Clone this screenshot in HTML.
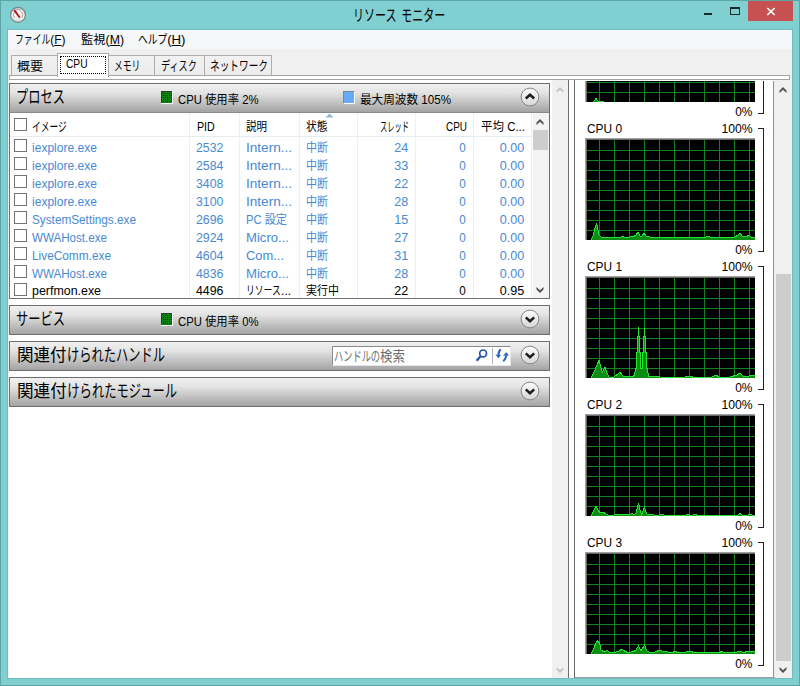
<!DOCTYPE html>
<html lang="ja"><head><meta charset="utf-8"><title>リソース モニター</title>
<style>
html,body{margin:0;padding:0;}
body{width:800px;height:686px;overflow:hidden;position:relative;background:#80cfd1;font-family:"Liberation Sans","Noto Sans CJK JP",sans-serif;}
.abs,.t,.g,.brk,.cb,.chk,.cs,.pan,.tab{position:absolute;box-sizing:border-box;}
.t{white-space:nowrap;display:block;}
.k{display:inline-block;transform:scaleX(0.74);transform-origin:0 50%;}
u{text-decoration:underline;}
#frame{left:0;top:0;width:800px;height:686px;border:1px solid #5fa5a8;}
#client{left:8px;top:30px;width:784px;height:648px;background:#f0f0f0;}
#clientb{left:7px;top:29px;width:786px;height:650px;border:1px solid #6fbcbf;}
#menu{left:8px;top:30px;width:784px;height:19px;background:#f5f6f7;border-top:1px solid #fbfcfc;}
#close{left:748px;top:1px;width:45px;height:20px;background:#c75050;}
.tab{background:#f0f0f0;border:1px solid #acacac;border-bottom:none;background:linear-gradient(#f2f2f2,#ebebeb);}
.pan{border:1px solid #6e6e6e;background:linear-gradient(#f0f0f0 0%,#e4e4e4 30%,#bfbfbf 70%,#a3a3a3 100%);}
.g{background:#000;border-top:1px solid #a0a0a0;border-left:1px solid #a0a0a0;overflow:hidden;}
.gi{position:absolute;left:0;top:0;right:0;bottom:0;border-top:1px solid #696969;border-left:1px solid #696969;}
.brk{border:1px solid #222;border-left:none;}
.chk{width:13px;height:13px;border:1px solid #747474;background:#fff;}
.cs{top:113px;width:1px;height:185px;background:#e9f0f7;}
</style></head><body>
<div class="abs" id="frame"></div>
<div class="abs" id="clientb"></div>
<div class="abs" id="client"></div>
<div class="abs" id="menu"></div>
<!-- title icon -->
<svg class="cb" style="left:9px;top:6px" width="18" height="18" viewBox="0 0 18 18">
<defs><linearGradient id="ic" x1="0" y1="0" x2="0" y2="1"><stop offset="0" stop-color="#ffffff"/><stop offset="0.6" stop-color="#f7f7f5"/><stop offset="1" stop-color="#d4d4d4"/></linearGradient></defs>
<circle cx="9" cy="8.9" r="7.4" fill="url(#ic)" stroke="#76888a" stroke-width="1.3"/>
<path d="M5.4 11.8 A4.6 4.6 0 0 1 5.6 5.8" fill="none" stroke="#b98b78" stroke-width="0.9"/>
<path d="M12.2 5.4 A4.6 4.6 0 0 1 12.9 11.6" fill="none" stroke="#b98b78" stroke-width="0.9"/>
<path d="M6.4 4.2 A5.2 5.2 0 0 1 12 4.4" fill="none" stroke="#7d7572" stroke-width="0.8"/>
<path d="M4.3 4.4 L6.1 3.4 L11.4 11 L10.2 12.2 Z" fill="#b8121f"/>
</svg>
<!-- window buttons -->
<div class="abs" style="left:704px;top:13px;width:8px;height:2px;background:#1b2a2b"></div>
<div class="abs" style="left:730px;top:7px;width:10px;height:8px;border:1px solid #1b2a2b;border-top-width:2px"></div>
<div class="abs" id="close"></div>
<svg class="cb" style="left:766px;top:7px" width="10" height="9" viewBox="0 0 10 9"><path d="M1.3 1 L8.7 8 M8.7 1 L1.3 8" stroke="#fff" stroke-width="1.7" fill="none"/></svg>
<!-- tabs -->
<div class="tab" style="left:11px;top:55px;width:47px;height:21px"></div>
<div class="tab" style="left:108px;top:55px;width:47px;height:21px"></div>
<div class="tab" style="left:154px;top:55px;width:51px;height:21px"></div>
<div class="tab" style="left:204px;top:55px;width:68px;height:21px"></div>
<div class="abs" style="left:9px;top:75px;width:781px;height:5px;background:#fff;border:1px solid #a5a5a5"></div>
<div class="tab" style="left:57px;top:53px;width:52px;height:24px;background:#fff"></div>
<div class="abs" style="left:60px;top:56px;width:46px;height:18px;border:1px dotted #000"></div>
<!-- left content -->
<div class="abs" style="left:9px;top:80px;width:543px;height:598px;background:#fff"></div>
<!-- process panel -->
<div class="abs" style="left:9px;top:83px;width:541px;height:216px;border:1px solid #6e6e6e;background:#fff"></div>
<div class="pan" style="left:9px;top:83px;width:541px;height:30px;border-bottom:1px solid #8a8a8a"></div>
<div class="abs" style="left:10px;top:136px;width:522px;height:1px;background:#e3ebf3"></div>
<div class="cs" style="left:189px"></div><div class="cs" style="left:239px"></div><div class="cs" style="left:299px"></div><div class="cs" style="left:357px"></div><div class="cs" style="left:415px"></div><div class="cs" style="left:473px"></div><div class="cs" style="left:531px"></div>
<div class="abs" style="left:533px;top:113px;width:16px;height:185px;background:#f3f3f3"></div>
<div class="abs" style="left:533px;top:130px;width:15px;height:20px;background:#cdcdcd"></div>
<div class="chk" style="left:14px;top:118px"></div><div class="chk" style="left:14px;top:139px"></div><div class="chk" style="left:14px;top:157px"></div><div class="chk" style="left:14px;top:175px"></div><div class="chk" style="left:14px;top:193px"></div><div class="chk" style="left:14px;top:211px"></div><div class="chk" style="left:14px;top:229px"></div><div class="chk" style="left:14px;top:247px"></div><div class="chk" style="left:14px;top:265px"></div><div class="chk" style="left:14px;top:283px"></div>
<!-- usage icons -->
<svg class="cb" style="left:161px;top:91px" width="12" height="13" viewBox="0 0 12 13" shape-rendering="crispEdges"><rect x="0" y="0" width="12" height="13" fill="#fff"/><rect x="0" y="0" width="11" height="12" fill="#2d3a2d"/><rect x="1" y="1" width="10" height="11" fill="#0f8215"/><g fill="#053d08" transform="translate(1,1)"><rect x="1" y="1" width="1" height="1"/><rect x="1" y="3" width="1" height="1"/><rect x="1" y="5" width="1" height="1"/><rect x="1" y="7" width="1" height="1"/><rect x="1" y="9" width="1" height="1"/><rect x="3" y="1" width="1" height="1"/><rect x="3" y="3" width="1" height="1"/><rect x="3" y="5" width="1" height="1"/><rect x="3" y="7" width="1" height="1"/><rect x="3" y="9" width="1" height="1"/><rect x="5" y="1" width="1" height="1"/><rect x="5" y="3" width="1" height="1"/><rect x="5" y="5" width="1" height="1"/><rect x="5" y="7" width="1" height="1"/><rect x="5" y="9" width="1" height="1"/><rect x="7" y="1" width="1" height="1"/><rect x="7" y="3" width="1" height="1"/><rect x="7" y="5" width="1" height="1"/><rect x="7" y="7" width="1" height="1"/><rect x="7" y="9" width="1" height="1"/><rect x="9" y="1" width="1" height="1"/><rect x="9" y="3" width="1" height="1"/><rect x="9" y="5" width="1" height="1"/><rect x="9" y="7" width="1" height="1"/><rect x="9" y="9" width="1" height="1"/></g></svg>
<div class="abs" style="left:343px;top:91px;width:12px;height:13px;border:1px solid #fff;border-top-color:#76879b;border-left-color:#76879b;background:#66abf9"></div>
<svg class="cb" style="left:325px;top:113px" width="9" height="5" viewBox="0 0 9 5"><path d="M0.5 4.5 L4.5 0.5 L8.5 4.5 Z" fill="#8fb9d6"/></svg>
<!-- other panels -->
<div class="pan" style="left:9px;top:305px;width:541px;height:30px"></div>
<div class="pan" style="left:9px;top:341px;width:541px;height:30px"></div>
<div class="pan" style="left:9px;top:377px;width:541px;height:30px"></div>
<svg class="cb" style="left:161px;top:313px" width="12" height="13" viewBox="0 0 12 13" shape-rendering="crispEdges"><rect x="0" y="0" width="12" height="13" fill="#fff"/><rect x="0" y="0" width="11" height="12" fill="#2d3a2d"/><rect x="1" y="1" width="10" height="11" fill="#0f8215"/><g fill="#053d08" transform="translate(1,1)"><rect x="1" y="1" width="1" height="1"/><rect x="1" y="3" width="1" height="1"/><rect x="1" y="5" width="1" height="1"/><rect x="1" y="7" width="1" height="1"/><rect x="1" y="9" width="1" height="1"/><rect x="3" y="1" width="1" height="1"/><rect x="3" y="3" width="1" height="1"/><rect x="3" y="5" width="1" height="1"/><rect x="3" y="7" width="1" height="1"/><rect x="3" y="9" width="1" height="1"/><rect x="5" y="1" width="1" height="1"/><rect x="5" y="3" width="1" height="1"/><rect x="5" y="5" width="1" height="1"/><rect x="5" y="7" width="1" height="1"/><rect x="5" y="9" width="1" height="1"/><rect x="7" y="1" width="1" height="1"/><rect x="7" y="3" width="1" height="1"/><rect x="7" y="5" width="1" height="1"/><rect x="7" y="7" width="1" height="1"/><rect x="7" y="9" width="1" height="1"/><rect x="9" y="1" width="1" height="1"/><rect x="9" y="3" width="1" height="1"/><rect x="9" y="5" width="1" height="1"/><rect x="9" y="7" width="1" height="1"/><rect x="9" y="9" width="1" height="1"/></g></svg>
<div class="abs" style="left:332px;top:346px;width:179px;height:20px;background:#fff;border:1px solid #e6e6e6;border-top-color:#8a8a8a;border-left-color:#8f8f8f"></div>
<div class="abs" style="left:492px;top:348px;width:1px;height:16px;background:#b0b0b0"></div>
<svg class="cb" style="left:475px;top:347px" width="14" height="16" viewBox="0 0 14 16"><circle cx="8.1" cy="6.4" r="3.4" fill="#fff" stroke="#2555a8" stroke-width="1.7"/><path d="M5.6 9.2 L1.6 13.8" stroke="#2555a8" stroke-width="2.3" fill="none"/></svg>
<svg class="cb" style="left:494px;top:347px" width="16" height="16" viewBox="0 0 16 16"><g fill="#2762c6" stroke="none"><path d="M1.3 7.4 L7 8.3 L4.4 11.2 Z"/><path d="M9 8.4 L15 8.7 L12.4 5.2 Z"/></g><g fill="none" stroke="#2762c6" stroke-width="2"><path d="M6.6 2.2 Q4.4 4.6 4.5 8.2"/><path d="M12.2 8.4 Q12 12 9.3 14.3"/></g></svg>
<svg class="cb" style="left:518.5px;top:86.2px" width="22" height="22" viewBox="-11 -11 22 22"><defs><linearGradient id="cg97" x1="0" y1="0" x2="0" y2="1"><stop offset="0" stop-color="#fdfdfd"/><stop offset="1" stop-color="#d6d6d6"/></linearGradient></defs><circle r="8.9" fill="url(#cg97)" stroke="#858585" stroke-width="1"/><path d="M-4.2 1.5 L0 -2.3 L4.2 1.5" fill="none" stroke="#1c1c1c" stroke-width="2.5" stroke-linecap="butt" stroke-linejoin="miter"/></svg><svg class="cb" style="left:518.5px;top:308.2px" width="22" height="22" viewBox="-11 -11 22 22"><defs><linearGradient id="cg319" x1="0" y1="0" x2="0" y2="1"><stop offset="0" stop-color="#fdfdfd"/><stop offset="1" stop-color="#d6d6d6"/></linearGradient></defs><circle r="8.9" fill="url(#cg319)" stroke="#858585" stroke-width="1"/><path d="M-4.2 -1.6 L0 2.2 L4.2 -1.6" fill="none" stroke="#1c1c1c" stroke-width="2.5" stroke-linecap="butt" stroke-linejoin="miter"/></svg><svg class="cb" style="left:518.5px;top:344.2px" width="22" height="22" viewBox="-11 -11 22 22"><defs><linearGradient id="cg355" x1="0" y1="0" x2="0" y2="1"><stop offset="0" stop-color="#fdfdfd"/><stop offset="1" stop-color="#d6d6d6"/></linearGradient></defs><circle r="8.9" fill="url(#cg355)" stroke="#858585" stroke-width="1"/><path d="M-4.2 -1.6 L0 2.2 L4.2 -1.6" fill="none" stroke="#1c1c1c" stroke-width="2.5" stroke-linecap="butt" stroke-linejoin="miter"/></svg><svg class="cb" style="left:518.5px;top:380.2px" width="22" height="22" viewBox="-11 -11 22 22"><defs><linearGradient id="cg391" x1="0" y1="0" x2="0" y2="1"><stop offset="0" stop-color="#fdfdfd"/><stop offset="1" stop-color="#d6d6d6"/></linearGradient></defs><circle r="8.9" fill="url(#cg391)" stroke="#858585" stroke-width="1"/><path d="M-4.2 -1.6 L0 2.2 L4.2 -1.6" fill="none" stroke="#1c1c1c" stroke-width="2.5" stroke-linecap="butt" stroke-linejoin="miter"/></svg>
<!-- left scrollbar -->
<div class="abs" style="left:552px;top:80px;width:16px;height:598px;background:#f0f0f0"></div>
<!-- splitter -->
<div class="abs" style="left:568px;top:80px;width:7px;height:598px;background:#fff;border-left:1px solid #6e6e6e;border-right:1px solid #666"></div>
<!-- right pane -->
<div class="abs" style="left:575px;top:80px;width:199px;height:597px;background:#fff"></div>
<div class="abs" style="left:773px;top:81px;width:1px;height:596px;background:#8e8e8e"></div>
<div class="abs" style="left:575px;top:677px;width:200px;height:1px;background:#a0a0a0"></div>
<div class="abs" style="left:776px;top:80px;width:16px;height:598px;background:#f0f0f0"></div>
<div class="abs" style="left:776px;top:274px;width:15px;height:387px;background:#cdcdcd"></div>
<svg class="cb" style="left:554.5px;top:86.0px" width="10" height="8" viewBox="-5 -4 10 8"><polygon points="0,-3.1 3.5,0.4 3.5,3 0,-0.2 -3.5,3 -3.5,0.4" fill="#c3c3c3"/></svg><svg class="cb" style="left:554.5px;top:666.0px" width="10" height="8" viewBox="-5 -4 10 8"><polygon points="0,-3.1 3.5,0.4 3.5,3 0,-0.2 -3.5,3 -3.5,0.4" fill="#c3c3c3" transform="scale(1,-1)"/></svg><svg class="cb" style="left:778.2px;top:86.0px" width="10" height="8" viewBox="-5 -4 10 8"><polygon points="0,-3.1 3.5,0.4 3.5,3 0,-0.2 -3.5,3 -3.5,0.4" fill="#505050"/></svg><svg class="cb" style="left:778.2px;top:666.0px" width="10" height="8" viewBox="-5 -4 10 8"><polygon points="0,-3.1 3.5,0.4 3.5,3 0,-0.2 -3.5,3 -3.5,0.4" fill="#505050" transform="scale(1,-1)"/></svg><svg class="cb" style="left:535.2px;top:118.0px" width="10" height="8" viewBox="-5 -4 10 8"><polygon points="0,-3.1 3.5,0.4 3.5,3 0,-0.2 -3.5,3 -3.5,0.4" fill="#505050"/></svg><svg class="cb" style="left:535.2px;top:285.9px" width="10" height="8" viewBox="-5 -4 10 8"><polygon points="0,-3.1 3.5,0.4 3.5,3 0,-0.2 -3.5,3 -3.5,0.4" fill="#505050" transform="scale(1,-1)"/></svg>
<div class="g" style="left:585px;top:81px;width:170px;height:21px;border-top:none"><div class="gi" style="border-top:none">
<svg width="168" height="21" viewBox="587 81 168 21" style="display:block">
<path d="M599.5 81 V102 M614.5 81 V102 M629.5 81 V102 M644.5 81 V102 M659.5 81 V102 M674.5 81 V102 M689.5 81 V102 M704.5 81 V102 M719.5 81 V102 M734.5 81 V102 M749.5 81 V102 M587 82.5 H755 M587 92.5 H755" stroke="#13821f" stroke-width="1" fill="none" shape-rendering="crispEdges"/>
<polygon points="592.0,102 592.0,103.0 594.0,101.0 596.0,98.5 598.0,101.0 599.5,102.0 601.5,101.0 603.5,101.0 604.5,103.0 755.0,103.0 755.0,102" fill="#0c8c12" stroke="none"/>
<polyline points="592.0,103.0 594.0,101.0 596.0,98.5 598.0,101.0 599.5,102.0 601.5,101.0 603.5,101.0 604.5,103.0 755.0,103.0" fill="none" stroke="#22e632" stroke-width="1" shape-rendering="crispEdges"/>
</svg></div></div>
<div class="g" style="left:585px;top:138px;width:170px;height:102px"><div class="gi">
<svg width="168" height="100" viewBox="587 140 168 100" style="display:block">
<path d="M599.5 140 V240 M614.5 140 V240 M629.5 140 V240 M644.5 140 V240 M659.5 140 V240 M674.5 140 V240 M689.5 140 V240 M704.5 140 V240 M719.5 140 V240 M734.5 140 V240 M749.5 140 V240 M587 150.5 H755 M587 160.5 H755 M587 170.5 H755 M587 180.5 H755 M587 190.5 H755 M587 200.5 H755 M587 210.5 H755 M587 220.5 H755 M587 230.5 H755" stroke="#13821f" stroke-width="1" fill="none" shape-rendering="crispEdges"/>
<polygon points="591.0,240 591.0,240.0 593.0,236.0 595.0,228.0 596.5,223.0 598.0,230.0 599.0,235.0 601.0,237.0 606.0,237.0 610.0,238.0 614.0,237.0 618.0,238.0 622.0,236.5 626.0,237.5 630.0,237.0 634.0,236.5 636.0,235.0 638.0,232.0 640.0,236.0 642.0,236.0 644.0,233.0 646.0,236.0 650.0,237.0 656.0,238.0 660.0,237.5 670.0,237.0 680.0,238.0 690.0,237.0 700.0,238.0 705.0,237.5 708.0,236.0 711.0,237.5 720.0,238.0 728.0,237.5 735.0,237.0 738.0,235.0 740.0,233.0 742.0,236.0 745.0,237.0 747.0,236.5 749.0,235.0 751.0,237.0 755.0,237.5 755.0,240" fill="#0c8c12" stroke="none"/>
<polyline points="591.0,240.0 593.0,236.0 595.0,228.0 596.5,223.0 598.0,230.0 599.0,235.0 601.0,237.0 606.0,237.0 610.0,238.0 614.0,237.0 618.0,238.0 622.0,236.5 626.0,237.5 630.0,237.0 634.0,236.5 636.0,235.0 638.0,232.0 640.0,236.0 642.0,236.0 644.0,233.0 646.0,236.0 650.0,237.0 656.0,238.0 660.0,237.5 670.0,237.0 680.0,238.0 690.0,237.0 700.0,238.0 705.0,237.5 708.0,236.0 711.0,237.5 720.0,238.0 728.0,237.5 735.0,237.0 738.0,235.0 740.0,233.0 742.0,236.0 745.0,237.0 747.0,236.5 749.0,235.0 751.0,237.0 755.0,237.5" fill="none" stroke="#22e632" stroke-width="1" shape-rendering="crispEdges"/>
</svg></div></div>
<div class="g" style="left:585px;top:276px;width:170px;height:102px"><div class="gi">
<svg width="168" height="100" viewBox="587 278 168 100" style="display:block">
<path d="M599.5 278 V378 M614.5 278 V378 M629.5 278 V378 M644.5 278 V378 M659.5 278 V378 M674.5 278 V378 M689.5 278 V378 M704.5 278 V378 M719.5 278 V378 M734.5 278 V378 M749.5 278 V378 M587 288.5 H755 M587 298.5 H755 M587 308.5 H755 M587 318.5 H755 M587 328.5 H755 M587 338.5 H755 M587 348.5 H755 M587 358.5 H755 M587 368.5 H755" stroke="#13821f" stroke-width="1" fill="none" shape-rendering="crispEdges"/>
<polygon points="591.0,378 591.0,378.0 594.0,372.0 597.0,365.0 599.0,360.0 601.0,368.0 602.5,372.0 605.0,367.0 607.0,373.0 609.0,377.0 614.0,377.0 618.0,374.0 620.0,372.0 623.0,376.0 626.0,377.0 628.0,376.0 631.0,376.5 633.5,376.0 634.5,375.0 635.5,368.5 636.5,368.5 636.5,352.5 637.5,352.5 637.5,336.5 638.5,336.5 638.5,327.0 638.5,336.5 639.5,336.5 639.5,352.5 640.5,352.5 640.5,368.5 642.5,368.5 642.5,352.5 643.5,352.5 643.5,336.5 644.5,336.5 644.5,328.0 644.5,336.5 645.5,336.5 645.5,352.5 646.5,352.5 646.5,368.5 647.5,368.5 648.5,376.5 652.0,377.0 656.0,376.0 660.0,377.0 680.0,377.5 690.0,376.5 695.0,377.5 712.0,377.0 716.0,375.0 719.0,377.0 730.0,377.0 737.0,375.0 740.0,373.0 743.0,376.0 748.0,376.5 752.0,375.0 755.0,376.0 755.0,378" fill="#0c8c12" stroke="none"/>
<polyline points="591.0,378.0 594.0,372.0 597.0,365.0 599.0,360.0 601.0,368.0 602.5,372.0 605.0,367.0 607.0,373.0 609.0,377.0 614.0,377.0 618.0,374.0 620.0,372.0 623.0,376.0 626.0,377.0 628.0,376.0 631.0,376.5 633.5,376.0 634.5,375.0 635.5,368.5 636.5,368.5 636.5,352.5 637.5,352.5 637.5,336.5 638.5,336.5 638.5,327.0 638.5,336.5 639.5,336.5 639.5,352.5 640.5,352.5 640.5,368.5 642.5,368.5 642.5,352.5 643.5,352.5 643.5,336.5 644.5,336.5 644.5,328.0 644.5,336.5 645.5,336.5 645.5,352.5 646.5,352.5 646.5,368.5 647.5,368.5 648.5,376.5 652.0,377.0 656.0,376.0 660.0,377.0 680.0,377.5 690.0,376.5 695.0,377.5 712.0,377.0 716.0,375.0 719.0,377.0 730.0,377.0 737.0,375.0 740.0,373.0 743.0,376.0 748.0,376.5 752.0,375.0 755.0,376.0" fill="none" stroke="#22e632" stroke-width="1" shape-rendering="crispEdges"/>
</svg></div></div>
<div class="g" style="left:585px;top:414px;width:170px;height:102px"><div class="gi">
<svg width="168" height="100" viewBox="587 416 168 100" style="display:block">
<path d="M599.5 416 V516 M614.5 416 V516 M629.5 416 V516 M644.5 416 V516 M659.5 416 V516 M674.5 416 V516 M689.5 416 V516 M704.5 416 V516 M719.5 416 V516 M734.5 416 V516 M749.5 416 V516 M587 426.5 H755 M587 436.5 H755 M587 446.5 H755 M587 456.5 H755 M587 466.5 H755 M587 476.5 H755 M587 486.5 H755 M587 496.5 H755 M587 506.5 H755" stroke="#13821f" stroke-width="1" fill="none" shape-rendering="crispEdges"/>
<polygon points="591.0,516 591.0,516.0 594.0,510.0 596.0,506.0 598.0,510.0 600.0,513.0 603.0,512.0 606.0,514.0 609.0,515.5 614.0,515.0 618.0,514.0 622.0,514.0 626.0,515.0 630.0,514.5 632.0,513.5 634.0,515.0 636.0,513.0 638.5,503.0 640.0,510.0 641.5,515.0 643.0,511.0 644.5,507.0 646.0,512.0 647.5,515.0 652.0,514.5 656.0,515.5 662.0,514.5 666.0,515.5 685.0,515.5 688.0,514.5 691.0,515.5 695.0,514.5 698.0,515.5 712.0,515.0 720.0,515.0 730.0,515.5 738.0,515.0 740.0,513.5 742.0,515.0 748.0,515.0 750.0,514.0 752.0,515.0 755.0,515.0 755.0,516" fill="#0c8c12" stroke="none"/>
<polyline points="591.0,516.0 594.0,510.0 596.0,506.0 598.0,510.0 600.0,513.0 603.0,512.0 606.0,514.0 609.0,515.5 614.0,515.0 618.0,514.0 622.0,514.0 626.0,515.0 630.0,514.5 632.0,513.5 634.0,515.0 636.0,513.0 638.5,503.0 640.0,510.0 641.5,515.0 643.0,511.0 644.5,507.0 646.0,512.0 647.5,515.0 652.0,514.5 656.0,515.5 662.0,514.5 666.0,515.5 685.0,515.5 688.0,514.5 691.0,515.5 695.0,514.5 698.0,515.5 712.0,515.0 720.0,515.0 730.0,515.5 738.0,515.0 740.0,513.5 742.0,515.0 748.0,515.0 750.0,514.0 752.0,515.0 755.0,515.0" fill="none" stroke="#22e632" stroke-width="1" shape-rendering="crispEdges"/>
</svg></div></div>
<div class="g" style="left:585px;top:552px;width:170px;height:102px"><div class="gi">
<svg width="168" height="100" viewBox="587 554 168 100" style="display:block">
<path d="M599.5 554 V654 M614.5 554 V654 M629.5 554 V654 M644.5 554 V654 M659.5 554 V654 M674.5 554 V654 M689.5 554 V654 M704.5 554 V654 M719.5 554 V654 M734.5 554 V654 M749.5 554 V654 M587 564.5 H755 M587 574.5 H755 M587 584.5 H755 M587 594.5 H755 M587 604.5 H755 M587 614.5 H755 M587 624.5 H755 M587 634.5 H755 M587 644.5 H755" stroke="#13821f" stroke-width="1" fill="none" shape-rendering="crispEdges"/>
<polygon points="591.0,654 591.0,654.0 594.0,648.0 596.0,643.0 597.5,641.0 599.5,643.0 601.0,650.0 604.0,652.0 607.0,650.5 610.0,652.5 613.0,653.0 618.0,651.5 622.0,649.0 625.0,651.5 628.0,652.5 631.0,652.0 634.0,651.5 636.0,650.0 638.5,646.0 641.0,651.0 644.5,645.0 647.0,651.0 650.0,652.5 655.0,652.0 660.0,650.0 663.0,651.5 668.0,652.0 672.0,652.5 675.0,651.5 678.0,652.5 686.0,652.0 690.0,651.5 695.0,652.5 710.0,652.5 720.0,652.5 722.0,651.0 724.0,652.5 735.0,652.5 740.0,651.0 743.0,652.5 748.0,651.5 755.0,651.5 755.0,654" fill="#0c8c12" stroke="none"/>
<polyline points="591.0,654.0 594.0,648.0 596.0,643.0 597.5,641.0 599.5,643.0 601.0,650.0 604.0,652.0 607.0,650.5 610.0,652.5 613.0,653.0 618.0,651.5 622.0,649.0 625.0,651.5 628.0,652.5 631.0,652.0 634.0,651.5 636.0,650.0 638.5,646.0 641.0,651.0 644.5,645.0 647.0,651.0 650.0,652.5 655.0,652.0 660.0,650.0 663.0,651.5 668.0,652.0 672.0,652.5 675.0,651.5 678.0,652.5 686.0,652.0 690.0,651.5 695.0,652.5 710.0,652.5 720.0,652.5 722.0,651.0 724.0,652.5 735.0,652.5 740.0,651.0 743.0,652.5 748.0,651.5 755.0,651.5" fill="none" stroke="#22e632" stroke-width="1" shape-rendering="crispEdges"/>
</svg></div></div>
<div class="brk" style="left:758px;top:81px;width:6px;height:33px;border-top:none"></div>
<div class="brk" style="left:758px;top:128px;width:6px;height:124px"></div>
<div class="brk" style="left:758px;top:266px;width:6px;height:124px"></div>
<div class="brk" style="left:758px;top:404px;width:6px;height:124px"></div>
<div class="brk" style="left:758px;top:542px;width:6px;height:124px"></div>
<span class="t" id="t0" style="left:353.00px;transform-origin:0 50%;top:4.00px;font-size:16px;line-height:24px;color:#000;transform:scaleX(0.9274);"><span class="k" style="width:4em;margin-right:-1.040em">リソース</span> <span class="k" style="width:4em;margin-right:-1.040em">モニター</span></span>
<span class="t" id="t1" style="left:15.00px;transform-origin:0 50%;top:31.00px;font-size:12.5px;line-height:19px;color:#000;transform:scaleX(0.9531);"><span class="k" style="width:4em;margin-right:-1.040em">ファイル</span>(<u>F</u>)</span>
<span class="t" id="t2" style="left:80.50px;transform-origin:0 50%;top:31.00px;font-size:12.5px;line-height:19px;color:#000;transform:scaleX(0.9825);">監視(<u>M</u>)</span>
<span class="t" id="t3" style="left:138.00px;transform-origin:0 50%;top:31.00px;font-size:12.5px;line-height:19px;color:#000;transform:scaleX(1.0526);"><span class="k" style="width:3em;margin-right:-0.780em">ヘルプ</span>(<u>H</u>)</span>
<span class="t" id="t4" style="left:16.50px;transform-origin:0 50%;top:57.50px;font-size:12px;line-height:18px;color:#000;transform:scaleX(1.0826);">概要</span>
<span class="t" id="t5" style="left:66.00px;transform-origin:0 50%;top:55.00px;font-size:12px;line-height:18px;color:#000;transform:scaleX(0.8483);">CPU</span>
<span class="t" id="t6" style="left:113.70px;transform-origin:0 50%;top:55.50px;font-size:13px;line-height:20px;color:#000;transform:scaleX(0.9108);"><span class="k" style="width:3em;margin-right:-0.780em">メモリ</span></span>
<span class="t" id="t7" style="left:161.00px;transform-origin:0 50%;top:55.50px;font-size:13px;line-height:20px;color:#000;transform:scaleX(0.9484);"><span class="k" style="width:4em;margin-right:-1.040em">ディスク</span></span>
<span class="t" id="t8" style="left:210.00px;transform-origin:0 50%;top:55.50px;font-size:13px;line-height:20px;color:#000;transform:scaleX(1.0046);"><span class="k" style="width:6em;margin-right:-1.560em">ネットワーク</span></span>
<span class="t" id="t9" style="left:16.00px;transform-origin:0 50%;top:84.00px;font-size:17.5px;line-height:26px;color:#000;transform:scaleX(0.9457);"><span class="k" style="width:4em;margin-right:-1.040em">プロセス</span></span>
<span class="t" id="t10" style="left:178.00px;transform-origin:0 50%;top:90.50px;font-size:12px;line-height:18px;color:#000;transform:scaleX(0.9431);">CPU 使用率 2%</span>
<span class="t" id="t11" style="left:360.00px;transform-origin:0 50%;top:90.50px;font-size:12px;line-height:18px;color:#000;transform:scaleX(0.9678);">最大周波数 105%</span>
<span class="t" id="t12" style="left:16.00px;transform-origin:0 50%;top:305.70px;font-size:17.5px;line-height:26px;color:#000;transform:scaleX(0.9457);"><span class="k" style="width:4em;margin-right:-1.040em">サービス</span></span>
<span class="t" id="t13" style="left:178.00px;transform-origin:0 50%;top:312.50px;font-size:12px;line-height:18px;color:#000;transform:scaleX(0.9431);">CPU 使用率 0%</span>
<span class="t" id="t14" style="left:16.50px;transform-origin:0 50%;top:341.70px;font-size:17.5px;line-height:26px;color:#000;transform:scaleX(0.9449);">関連付<span class="k" style="width:8em;margin-right:-2.080em">けられたハンドル</span></span>
<span class="t" id="t15" style="left:16.50px;transform-origin:0 50%;top:377.70px;font-size:17.5px;line-height:26px;color:#000;transform:scaleX(0.9494);">関連付<span class="k" style="width:9em;margin-right:-2.340em">けられたモジュール</span></span>
<span class="t" id="t16" style="left:334.00px;transform-origin:0 50%;top:346.80px;font-size:13.5px;line-height:20px;color:#6d6d6d;transform:scaleX(0.9226);"><span class="k" style="width:5em;margin-right:-1.300em">ハンドルの</span>検索</span>
<span class="t" id="t17" style="left:32.00px;transform-origin:0 50%;top:116.50px;font-size:13px;line-height:20px;color:#000;transform:scaleX(0.9095);"><span class="k" style="width:4em;margin-right:-1.040em">イメージ</span></span>
<span class="t" id="t18" style="left:196.60px;transform-origin:0 50%;top:117.50px;font-size:12px;line-height:18px;color:#000;transform:scaleX(0.8893);">PID</span>
<span class="t" id="t19" style="left:246.00px;transform-origin:0 50%;top:117.50px;font-size:12px;line-height:18px;color:#000;transform:scaleX(0.8744);">説明</span>
<span class="t" id="t20" style="left:306.00px;transform-origin:0 50%;top:117.50px;font-size:12px;line-height:18px;color:#000;transform:scaleX(0.9036);">状態</span>
<span class="t" id="t21" style="left:380.00px;transform-origin:0 50%;top:116.50px;font-size:13px;line-height:20px;color:#000;transform:scaleX(0.7536);"><span class="k" style="width:4em;margin-right:-1.040em">スレッド</span></span>
<span class="t" id="t22" style="left:446.00px;transform-origin:0 50%;top:117.50px;font-size:12px;line-height:18px;color:#000;transform:scaleX(0.8286);">CPU</span>
<span class="t" id="t23" style="left:481.00px;transform-origin:0 50%;top:117.50px;font-size:12px;line-height:18px;color:#000;transform:scaleX(0.9562);">平均 C...</span>
<span class="t" id="t24" style="left:32.00px;transform-origin:0 50%;top:138.50px;font-size:12px;line-height:18px;color:#4889d2;transform:scaleX(1.0043);">iexplore.exe</span>
<span class="t" id="t25" style="left:196.00px;transform-origin:0 50%;top:138.50px;font-size:12px;line-height:18px;color:#4889d2;transform:scaleX(1.0298);">2532</span>
<span class="t" id="t26" style="left:246.00px;transform-origin:0 50%;top:138.50px;font-size:12px;line-height:18px;color:#4889d2;transform:scaleX(1.1306);">Intern...</span>
<span class="t" id="t27" style="left:306.00px;transform-origin:0 50%;top:138.50px;font-size:12px;line-height:18px;color:#4889d2;transform:scaleX(0.9161);">中断</span>
<span class="t" id="t28" style="right:392.00px;transform-origin:100% 50%;top:138.50px;font-size:12px;line-height:18px;color:#4889d2;transform:scaleX(1.0480);">24</span>
<span class="t" id="t29" style="right:334.00px;transform-origin:100% 50%;top:138.50px;font-size:12px;line-height:18px;color:#4889d2;transform:scaleX(0.9720);">0</span>
<span class="t" id="t30" style="right:276.00px;transform-origin:100% 50%;top:138.50px;font-size:12px;line-height:18px;color:#4889d2;transform:scaleX(1.0488);">0.00</span>
<span class="t" id="t31" style="left:32.00px;transform-origin:0 50%;top:156.50px;font-size:12px;line-height:18px;color:#4889d2;transform:scaleX(1.0043);">iexplore.exe</span>
<span class="t" id="t32" style="left:196.00px;transform-origin:0 50%;top:156.50px;font-size:12px;line-height:18px;color:#4889d2;transform:scaleX(1.0298);">2584</span>
<span class="t" id="t33" style="left:246.00px;transform-origin:0 50%;top:156.50px;font-size:12px;line-height:18px;color:#4889d2;transform:scaleX(1.1306);">Intern...</span>
<span class="t" id="t34" style="left:306.00px;transform-origin:0 50%;top:156.50px;font-size:12px;line-height:18px;color:#4889d2;transform:scaleX(0.9161);">中断</span>
<span class="t" id="t35" style="right:392.00px;transform-origin:100% 50%;top:156.50px;font-size:12px;line-height:18px;color:#4889d2;transform:scaleX(1.0480);">33</span>
<span class="t" id="t36" style="right:334.00px;transform-origin:100% 50%;top:156.50px;font-size:12px;line-height:18px;color:#4889d2;transform:scaleX(0.9720);">0</span>
<span class="t" id="t37" style="right:276.00px;transform-origin:100% 50%;top:156.50px;font-size:12px;line-height:18px;color:#4889d2;transform:scaleX(1.0488);">0.00</span>
<span class="t" id="t38" style="left:32.00px;transform-origin:0 50%;top:174.50px;font-size:12px;line-height:18px;color:#4889d2;transform:scaleX(1.0043);">iexplore.exe</span>
<span class="t" id="t39" style="left:196.00px;transform-origin:0 50%;top:174.50px;font-size:12px;line-height:18px;color:#4889d2;transform:scaleX(1.0298);">3408</span>
<span class="t" id="t40" style="left:246.00px;transform-origin:0 50%;top:174.50px;font-size:12px;line-height:18px;color:#4889d2;transform:scaleX(1.1306);">Intern...</span>
<span class="t" id="t41" style="left:306.00px;transform-origin:0 50%;top:174.50px;font-size:12px;line-height:18px;color:#4889d2;transform:scaleX(0.9161);">中断</span>
<span class="t" id="t42" style="right:392.00px;transform-origin:100% 50%;top:174.50px;font-size:12px;line-height:18px;color:#4889d2;transform:scaleX(1.0480);">22</span>
<span class="t" id="t43" style="right:334.00px;transform-origin:100% 50%;top:174.50px;font-size:12px;line-height:18px;color:#4889d2;transform:scaleX(0.9720);">0</span>
<span class="t" id="t44" style="right:276.00px;transform-origin:100% 50%;top:174.50px;font-size:12px;line-height:18px;color:#4889d2;transform:scaleX(1.0488);">0.00</span>
<span class="t" id="t45" style="left:32.00px;transform-origin:0 50%;top:192.50px;font-size:12px;line-height:18px;color:#4889d2;transform:scaleX(1.0043);">iexplore.exe</span>
<span class="t" id="t46" style="left:196.00px;transform-origin:0 50%;top:192.50px;font-size:12px;line-height:18px;color:#4889d2;transform:scaleX(1.0298);">3100</span>
<span class="t" id="t47" style="left:246.00px;transform-origin:0 50%;top:192.50px;font-size:12px;line-height:18px;color:#4889d2;transform:scaleX(1.1306);">Intern...</span>
<span class="t" id="t48" style="left:306.00px;transform-origin:0 50%;top:192.50px;font-size:12px;line-height:18px;color:#4889d2;transform:scaleX(0.9161);">中断</span>
<span class="t" id="t49" style="right:392.00px;transform-origin:100% 50%;top:192.50px;font-size:12px;line-height:18px;color:#4889d2;transform:scaleX(1.0480);">28</span>
<span class="t" id="t50" style="right:334.00px;transform-origin:100% 50%;top:192.50px;font-size:12px;line-height:18px;color:#4889d2;transform:scaleX(0.9720);">0</span>
<span class="t" id="t51" style="right:276.00px;transform-origin:100% 50%;top:192.50px;font-size:12px;line-height:18px;color:#4889d2;transform:scaleX(1.0488);">0.00</span>
<span class="t" id="t52" style="left:32.00px;transform-origin:0 50%;top:210.50px;font-size:12px;line-height:18px;color:#4889d2;transform:scaleX(0.9806);">SystemSettings.exe</span>
<span class="t" id="t53" style="left:196.00px;transform-origin:0 50%;top:210.50px;font-size:12px;line-height:18px;color:#4889d2;transform:scaleX(1.0298);">2696</span>
<span class="t" id="t54" style="left:246.00px;transform-origin:0 50%;top:210.50px;font-size:12px;line-height:18px;color:#4889d2;transform:scaleX(0.9315);">PC 設定</span>
<span class="t" id="t55" style="left:306.00px;transform-origin:0 50%;top:210.50px;font-size:12px;line-height:18px;color:#4889d2;transform:scaleX(0.9161);">中断</span>
<span class="t" id="t56" style="right:392.00px;transform-origin:100% 50%;top:210.50px;font-size:12px;line-height:18px;color:#4889d2;transform:scaleX(1.0480);">15</span>
<span class="t" id="t57" style="right:334.00px;transform-origin:100% 50%;top:210.50px;font-size:12px;line-height:18px;color:#4889d2;transform:scaleX(0.9720);">0</span>
<span class="t" id="t58" style="right:276.00px;transform-origin:100% 50%;top:210.50px;font-size:12px;line-height:18px;color:#4889d2;transform:scaleX(1.0488);">0.00</span>
<span class="t" id="t59" style="left:32.00px;transform-origin:0 50%;top:228.50px;font-size:12px;line-height:18px;color:#4889d2;transform:scaleX(0.9668);">WWAHost.exe</span>
<span class="t" id="t60" style="left:196.00px;transform-origin:0 50%;top:228.50px;font-size:12px;line-height:18px;color:#4889d2;transform:scaleX(1.0298);">2924</span>
<span class="t" id="t61" style="left:246.00px;transform-origin:0 50%;top:228.50px;font-size:12px;line-height:18px;color:#4889d2;transform:scaleX(1.0929);">Micro...</span>
<span class="t" id="t62" style="left:306.00px;transform-origin:0 50%;top:228.50px;font-size:12px;line-height:18px;color:#4889d2;transform:scaleX(0.9161);">中断</span>
<span class="t" id="t63" style="right:392.00px;transform-origin:100% 50%;top:228.50px;font-size:12px;line-height:18px;color:#4889d2;transform:scaleX(1.0480);">27</span>
<span class="t" id="t64" style="right:334.00px;transform-origin:100% 50%;top:228.50px;font-size:12px;line-height:18px;color:#4889d2;transform:scaleX(0.9720);">0</span>
<span class="t" id="t65" style="right:276.00px;transform-origin:100% 50%;top:228.50px;font-size:12px;line-height:18px;color:#4889d2;transform:scaleX(1.0488);">0.00</span>
<span class="t" id="t66" style="left:32.00px;transform-origin:0 50%;top:246.50px;font-size:12px;line-height:18px;color:#4889d2;transform:scaleX(0.9871);">LiveComm.exe</span>
<span class="t" id="t67" style="left:196.00px;transform-origin:0 50%;top:246.50px;font-size:12px;line-height:18px;color:#4889d2;transform:scaleX(1.0298);">4604</span>
<span class="t" id="t68" style="left:246.00px;transform-origin:0 50%;top:246.50px;font-size:12px;line-height:18px;color:#4889d2;transform:scaleX(1.0752);">Com...</span>
<span class="t" id="t69" style="left:306.00px;transform-origin:0 50%;top:246.50px;font-size:12px;line-height:18px;color:#4889d2;transform:scaleX(0.9161);">中断</span>
<span class="t" id="t70" style="right:392.00px;transform-origin:100% 50%;top:246.50px;font-size:12px;line-height:18px;color:#4889d2;transform:scaleX(1.0480);">31</span>
<span class="t" id="t71" style="right:334.00px;transform-origin:100% 50%;top:246.50px;font-size:12px;line-height:18px;color:#4889d2;transform:scaleX(0.9720);">0</span>
<span class="t" id="t72" style="right:276.00px;transform-origin:100% 50%;top:246.50px;font-size:12px;line-height:18px;color:#4889d2;transform:scaleX(1.0488);">0.00</span>
<span class="t" id="t73" style="left:32.00px;transform-origin:0 50%;top:264.50px;font-size:12px;line-height:18px;color:#4889d2;transform:scaleX(0.9668);">WWAHost.exe</span>
<span class="t" id="t74" style="left:196.00px;transform-origin:0 50%;top:264.50px;font-size:12px;line-height:18px;color:#4889d2;transform:scaleX(1.0298);">4836</span>
<span class="t" id="t75" style="left:246.00px;transform-origin:0 50%;top:264.50px;font-size:12px;line-height:18px;color:#4889d2;transform:scaleX(1.0929);">Micro...</span>
<span class="t" id="t76" style="left:306.00px;transform-origin:0 50%;top:264.50px;font-size:12px;line-height:18px;color:#4889d2;transform:scaleX(0.9161);">中断</span>
<span class="t" id="t77" style="right:392.00px;transform-origin:100% 50%;top:264.50px;font-size:12px;line-height:18px;color:#4889d2;transform:scaleX(1.0480);">28</span>
<span class="t" id="t78" style="right:334.00px;transform-origin:100% 50%;top:264.50px;font-size:12px;line-height:18px;color:#4889d2;transform:scaleX(0.9720);">0</span>
<span class="t" id="t79" style="right:276.00px;transform-origin:100% 50%;top:264.50px;font-size:12px;line-height:18px;color:#4889d2;transform:scaleX(1.0488);">0.00</span>
<span class="t" id="t80" style="left:32.00px;transform-origin:0 50%;top:281.50px;font-size:12px;line-height:18px;color:#000;transform:scaleX(1.0344);">perfmon.exe</span>
<span class="t" id="t81" style="left:196.00px;transform-origin:0 50%;top:281.50px;font-size:12px;line-height:18px;color:#000;transform:scaleX(1.0298);">4496</span>
<span class="t" id="t82" style="left:246.00px;transform-origin:0 50%;top:281.50px;font-size:12px;line-height:18px;color:#000;transform:scaleX(0.9880);"><span class="k" style="width:4em;margin-right:-1.040em">リソース</span>...</span>
<span class="t" id="t83" style="left:306.00px;transform-origin:0 50%;top:281.50px;font-size:12px;line-height:18px;color:#000;transform:scaleX(0.9163);">実行中</span>
<span class="t" id="t84" style="right:392.00px;transform-origin:100% 50%;top:281.50px;font-size:12px;line-height:18px;color:#000;transform:scaleX(1.0480);">22</span>
<span class="t" id="t85" style="right:334.00px;transform-origin:100% 50%;top:281.50px;font-size:12px;line-height:18px;color:#000;transform:scaleX(0.9720);">0</span>
<span class="t" id="t86" style="right:276.00px;transform-origin:100% 50%;top:281.50px;font-size:12px;line-height:18px;color:#000;transform:scaleX(1.0488);">0.95</span>
<span class="t" id="t87" style="left:587.00px;transform-origin:0 50%;top:119.50px;font-size:12px;line-height:18px;color:#000;transform:scaleX(0.9903);">CPU 0</span>
<span class="t" id="t88" style="right:47.30px;transform-origin:100% 50%;top:119.50px;font-size:12px;line-height:18px;color:#000;transform:scaleX(1.0162);">100%</span>
<span class="t" id="t89" style="left:587.00px;transform-origin:0 50%;top:257.50px;font-size:12px;line-height:18px;color:#000;transform:scaleX(0.9903);">CPU 1</span>
<span class="t" id="t90" style="right:47.30px;transform-origin:100% 50%;top:257.50px;font-size:12px;line-height:18px;color:#000;transform:scaleX(1.0162);">100%</span>
<span class="t" id="t91" style="left:587.00px;transform-origin:0 50%;top:395.50px;font-size:12px;line-height:18px;color:#000;transform:scaleX(0.9903);">CPU 2</span>
<span class="t" id="t92" style="right:47.30px;transform-origin:100% 50%;top:395.50px;font-size:12px;line-height:18px;color:#000;transform:scaleX(1.0162);">100%</span>
<span class="t" id="t93" style="left:587.00px;transform-origin:0 50%;top:533.50px;font-size:12px;line-height:18px;color:#000;transform:scaleX(0.9903);">CPU 3</span>
<span class="t" id="t94" style="right:47.30px;transform-origin:100% 50%;top:533.50px;font-size:12px;line-height:18px;color:#000;transform:scaleX(1.0162);">100%</span>
<span class="t" id="t95" style="right:47.30px;transform-origin:100% 50%;top:102.50px;font-size:12px;line-height:18px;color:#000;transform:scaleX(0.9917);">0%</span>
<span class="t" id="t96" style="right:47.30px;transform-origin:100% 50%;top:240.50px;font-size:12px;line-height:18px;color:#000;transform:scaleX(0.9917);">0%</span>
<span class="t" id="t97" style="right:47.30px;transform-origin:100% 50%;top:378.50px;font-size:12px;line-height:18px;color:#000;transform:scaleX(0.9917);">0%</span>
<span class="t" id="t98" style="right:47.30px;transform-origin:100% 50%;top:516.50px;font-size:12px;line-height:18px;color:#000;transform:scaleX(0.9917);">0%</span>
<span class="t" id="t99" style="right:47.30px;transform-origin:100% 50%;top:654.50px;font-size:12px;line-height:18px;color:#000;transform:scaleX(0.9917);">0%</span>
</body></html>
